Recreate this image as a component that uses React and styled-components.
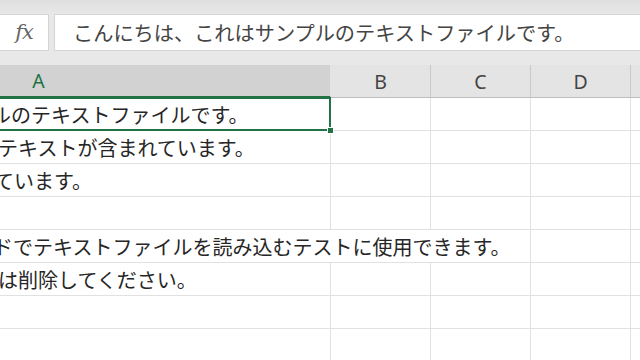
import React from 'react';
import styled, { createGlobalStyle } from 'styled-components';

const GlobalStyle = createGlobalStyle`
  html, body {
    margin: 0;
    padding: 0;
  }
  body {
    width: 640px;
    height: 360px;
    overflow: hidden;
    background: #e6e6e6;
    font-family: "Noto Sans CJK JP", "Noto Sans", sans-serif;
  }
`;

// how far the sheet is scrolled to the right
const SCROLL = 253;
const GREEN = '#217346';

const Window = styled.div`
  width: 640px;
  height: 360px;
  display: flex;
  flex-direction: column;
  overflow: hidden;
  background: linear-gradient(#dedede, #e8e8e8 14px);
`;

const FormulaBar = styled.div`
  display: flex;
  gap: 5px;
  height: 37px;
  padding: 14px 0;
`;

const FxButton = styled.div`
  width: 49px;
  box-sizing: border-box;
  background: #fff;
  border: 1px solid #d4d4d4;
  border-left: none;
  display: flex;
  align-items: center;
  justify-content: center;
  padding-bottom: 2px;
  font-family: "DejaVu Serif", serif;
  font-style: italic;
  font-size: 21px;
  color: #666;
  letter-spacing: -1px;
`;

const FormulaInput = styled.div`
  flex: 1;
  box-sizing: border-box;
  background: #fff;
  border: 1px solid #d4d4d4;
  border-right: none;
  padding-left: 18px;
  display: flex;
  align-items: center;
  font-size: 20.2px;
  color: #444;
  white-space: nowrap;
`;

const Sheet = styled.div`
  flex: 1;
  background: #fff;
  overflow: hidden;
`;

const Scroller = styled.div`
  margin-left: -${SCROLL}px;
  width: max-content;
`;

const Row = styled.div`
  display: grid;
  grid-template-columns: 584px repeat(4, 100px);
  height: 33px;
`;

const HeaderCell = styled.div`
  box-sizing: border-box;
  background: ${p => (p.$active ? '#d2d2d2' : '#e4e4e4')};
  border-right: 1px solid ${p => (p.$active ? '#e4e4e4' : '#c9c9c9')};
  border-bottom: ${p => (p.$active ? `2px solid ${GREEN}` : '1px solid #bdbdbd')};
  display: flex;
  align-items: center;
  justify-content: center;
  font-family: "Noto Sans", sans-serif;
  font-size: 19.5px;
  color: ${p => (p.$active ? GREEN : '#444')};
`;

const Cell = styled.div`
  box-sizing: border-box;
  position: relative;
  grid-column: span ${p => p.$span || 1};
  border-right: 1px solid #e1e1e1;
  border-bottom: 1px solid #e1e1e1;
  display: flex;
  align-items: center;
  white-space: nowrap;
  font-size: 20px;
  color: #262626;

  ${p =>
    p.$selected &&
    `
    &::after {
      content: '';
      position: absolute;
      left: -2px;
      top: -1px;
      right: -1px;
      bottom: -1px;
      border: 2px solid ${GREEN};
      pointer-events: none;
    }
    &::before {
      content: '';
      position: absolute;
      right: -4px;
      bottom: -4px;
      width: 5px;
      height: 5px;
      background: ${GREEN};
      border: 1px solid #fff;
      z-index: 2;
    }
  `}
`;

const CellText = styled.span`
  margin-left: ${p => SCROLL + p.$shift}px;
`;

// E lies past the right edge of the window, so its label stays empty
const columns = ['A', 'B', 'C', 'D', ''];

const rows = [
  { text: 'ルのテキストファイルです。', shift: -9, selected: true },
  { text: 'テキストが含まれています。', shift: -2 },
  { text: 'ています。', shift: -6 },
  { text: '' },
  { text: 'ドでテキストファイルを読み込むテストに使用できます。', shift: -7, span: 3 },
  { text: 'は削除してください。', shift: -2 },
  { text: '' },
  { text: '' },
];

export default function App() {
  return (
    <>
      <GlobalStyle />
      <Window>
        <FormulaBar>
          <FxButton>fx</FxButton>
          <FormulaInput>こんにちは、これはサンプルのテキストファイルです。</FormulaInput>
        </FormulaBar>
        <Sheet>
          <Scroller>
            <Row>
              {columns.map((c, i) => (
                <HeaderCell key={i} $active={c === 'A'}>{c}</HeaderCell>
              ))}
            </Row>
            {rows.map((r, i) => {
              const span = r.span || 1;
              return (
                <Row key={i}>
                  <Cell $span={span} $selected={r.selected}>
                    {r.text && <CellText $shift={r.shift}>{r.text}</CellText>}
                  </Cell>
                  {columns.slice(span).map((c, j) => (
                    <Cell key={j} />
                  ))}
                </Row>
              );
            })}
          </Scroller>
        </Sheet>
      </Window>
    </>
  );
}
